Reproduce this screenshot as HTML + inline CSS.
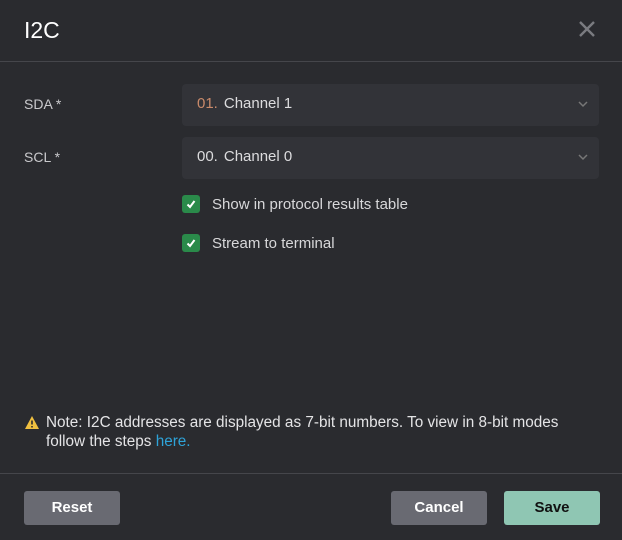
<!DOCTYPE html>
<html><head><style>
*{margin:0;padding:0;box-sizing:border-box}
body{width:622px;height:540px;background:#2a2b2f;font-family:"Liberation Sans",sans-serif;color:#d8d8da;position:relative;overflow:hidden}
.abs{position:absolute}
.title{left:24px;top:17px;font-size:23px;color:#fff}
.close{left:578px;top:20px}
.hl{left:0;width:622px;height:1px;background:#45464b}
.lbl{left:24px;font-size:14px;color:#c9c9cc}
.sel{left:182px;width:417px;height:42px;background:#323338;border-radius:4px;font-size:15px;padding:11px 0 0 15px;color:#dcdcde}
.sel .n{margin-right:6px}
.chev{position:absolute;right:11px;top:16px}
.cb{left:182px;width:18px;height:18px;background:#2a8a4a;border-radius:3px}
.cbt{left:212px;font-size:15px;color:#d8d8da}
.note{left:46px;top:413px;font-size:15.3px;line-height:19px;color:#e4e4e6}
.btn{top:491px;height:34px;width:96px;border-radius:3px;font-size:15px;font-weight:bold;text-align:center;line-height:34px}
</style></head><body>
<div class="abs title">I2C</div>
<svg class="abs close" width="18" height="18" viewBox="0 0 18 18"><path d="M2 2L16 16M16 2L2 16" stroke="#7a7b80" stroke-width="2.4"/></svg>
<div class="abs hl" style="top:61px"></div>
<div class="abs lbl" style="top:96px">SDA *</div>
<div class="abs lbl" style="top:149px">SCL *</div>
<div class="abs sel" style="top:84px"><span class="n" style="color:#c98a6a">01.</span>Channel 1<svg class="chev" width="10" height="8" viewBox="0 0 10 8"><path d="M1 2L5 6L9 2" stroke="#777" stroke-width="1.5" fill="none"/></svg></div>
<div class="abs sel" style="top:137px"><span class="n">00.</span>Channel 0<svg class="chev" width="10" height="8" viewBox="0 0 10 8"><path d="M1 2L5 6L9 2" stroke="#777" stroke-width="1.5" fill="none"/></svg></div>
<div class="abs cb" style="top:195px"><svg width="18" height="18" viewBox="0 0 18 18"><path d="M5.5 9.5L8 12L12.5 6" stroke="#fff" stroke-width="2" fill="none"/></svg></div>
<div class="abs cbt" style="top:196px">Show in protocol results table</div>
<div class="abs cb" style="top:234px"><svg width="18" height="18" viewBox="0 0 18 18"><path d="M5.5 9.5L8 12L12.5 6" stroke="#fff" stroke-width="2" fill="none"/></svg></div>
<div class="abs cbt" style="top:235px">Stream to terminal</div>
<svg class="abs" style="left:24px;top:415px" width="16" height="15" viewBox="0 0 16 15"><path d="M8 1L15 14H1Z" fill="#f0c040"/><path d="M8 5.5V9.5M8 11V12.5" stroke="#2a2b2f" stroke-width="1.6"/></svg>
<div class="abs note">Note: I2C addresses are displayed as 7-bit numbers. To view in 8-bit modes<br>follow the steps <span style="color:#2ea3d8">here.</span></div>
<div class="abs hl" style="top:473px"></div>
<div class="abs btn" style="left:24px;background:#696a72;color:#fff">Reset</div>
<div class="abs btn" style="left:391px;background:#696a72;color:#fff">Cancel</div>
<div class="abs btn" style="left:504px;background:#8fc6b3;color:#111">Save</div>
</body></html>
